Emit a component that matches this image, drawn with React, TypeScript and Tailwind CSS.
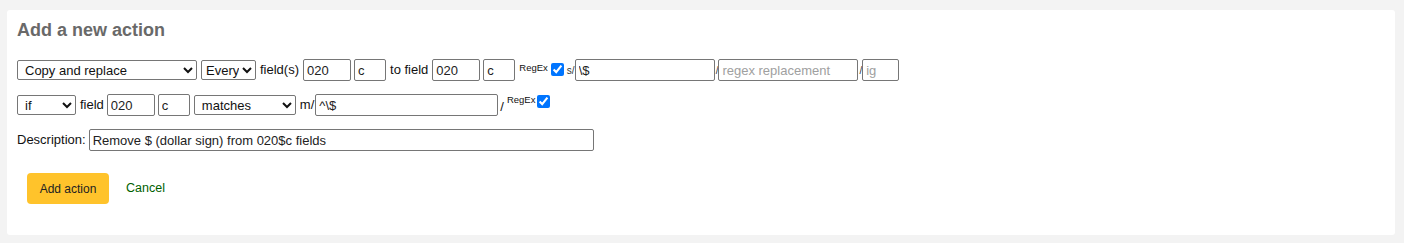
import React from "react";

const inp =
  "h-[22px] border border-[#767676] rounded-[2px] bg-white px-[3px] text-[13px] text-[#222] outline-none placeholder:text-[#a0a0a0]";
const sel =
  "h-[20px] border border-[#767676] rounded-[2px] bg-white pl-[3px] text-[13px] text-[#111]";

export default function App() {
  return (
    <div
      className="w-[1404px] h-[243px] bg-[#f3f3f3] pt-[10px] pl-[7px]"
      style={{ fontFamily: '"Liberation Sans", Arial, sans-serif' }}
    >
      <div className="w-[1388px] h-[225px] bg-white rounded-[3px] pl-[10px] pt-[10px] text-[13px] text-[#111]">
        <h3 className="text-[18px] font-bold text-[#696969] leading-[20px]">
          Add a new action
        </h3>

        <div className="flex items-center mt-[19px] h-[22px]">
          <select className={`${sel} w-[180px]`} defaultValue="copy_replace">
            <option value="copy_replace">Copy and replace</option>
          </select>
          <select className={`${sel} w-[55px] ml-[4px] !pl-0`} defaultValue="every">
            <option value="every">Every</option>
          </select>
          <span className="ml-[4px]">field(s)</span>
          <input className={`${inp} w-[48px] ml-[4px]`} defaultValue="020" />
          <input className={`${inp} w-[32px] ml-[3px]`} defaultValue="c" />
          <span className="ml-[4px]">to field</span>
          <input className={`${inp} w-[48px] ml-[4px]`} defaultValue="020" />
          <input className={`${inp} w-[32px] ml-[3px]`} defaultValue="c" />
          <span className="ml-[4px] text-[9.5px] self-start mt-[2px]">RegEx</span>
          <input
            type="checkbox"
            defaultChecked
            className="ml-[3px] w-[13px] h-[13px] self-start mt-[4px]"
          />
          <span className="ml-[3px] text-[10px] text-[#333]">s/</span>
          <input className={`${inp} w-[140px] h-[17px] text-[10px]`} defaultValue="\$" />
          <span className="ml-[1px] text-[10px] text-[#333]">/</span>
          <input
            className={`${inp} w-[140px] h-[17px] text-[10px]`}
            placeholder="regex replacement"
          />
          <span className="ml-[1px] text-[10px] text-[#333]">/</span>
          <input className={`${inp} w-[37px] h-[17px] text-[10px]`} placeholder="ig" />
        </div>

        <div className="flex items-center mt-[13px] h-[22px]">
          <select className={`${sel} w-[59px]`} defaultValue="if">
            <option value="if">if</option>
          </select>
          <span className="ml-[4px]">field</span>
          <input className={`${inp} w-[48px] ml-[3px]`} defaultValue="020" />
          <input className={`${inp} w-[32px] ml-[3px]`} defaultValue="c" />
          <select className={`${sel} w-[102px] ml-[4px]`} defaultValue="matches">
            <option value="matches">matches</option>
          </select>
          <span className="ml-[4px]">m/</span>
          <input className={`${inp} w-[183px] ml-[1px]`} defaultValue="^\$" />
          <span className="ml-[2px] self-end">/</span>
          <span className="ml-[3px] text-[9.5px] self-start mt-[-1px]">RegEx</span>
          <input
            type="checkbox"
            defaultChecked
            className="ml-[2px] w-[13px] h-[13px] self-start mt-[1px]"
          />
        </div>

        <div className="flex items-center mt-[13px] h-[22px]">
          <span>Description:</span>
          <input
            className={`${inp} w-[505px] ml-[3px]`}
            defaultValue="Remove $ (dollar sign) from 020$c fields"
          />
        </div>

        <div className="flex items-center mt-[22px] ml-[10px]">
          <button className="h-[31px] w-[82px] rounded-[4px] bg-[#ffc32b] text-[12px] text-[#222]">
            Add action
          </button>
          <a href="#" className="ml-[17px] text-[12.5px] text-[#006100]">
            Cancel
          </a>
        </div>
      </div>
    </div>
  );
}
